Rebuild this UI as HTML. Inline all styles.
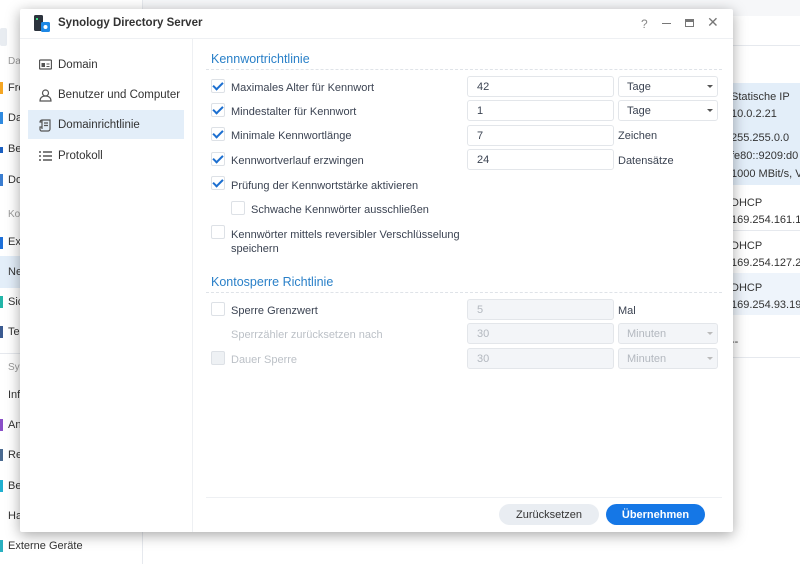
<!DOCTYPE html>
<html><head><meta charset="utf-8"><style>
*{box-sizing:border-box;margin:0;padding:0}
body{width:800px;height:564px;overflow:hidden;background:#fff;font-family:"Liberation Sans",sans-serif;font-size:11px;color:#3b4352;position:relative}
.abs{position:absolute;white-space:nowrap}
.bgl{left:0;top:0;width:143px;height:564px;background:#fff;border-right:1px solid #e6e9ee}
.bgitem{position:absolute;left:8px;font-size:11px;color:#333}
.bar{position:absolute;left:0;width:3px;height:12px}
.dlg{left:20px;top:9px;width:713px;height:523px;background:#fff;box-shadow:0 3px 14px rgba(0,0,0,.35);border-radius:2px}
.title{position:absolute;left:0;top:0;width:713px;height:30px;border-bottom:1px solid #eef0f3}
.nav{position:absolute;left:0;top:30px;width:173px;height:493px;border-right:1px solid #eef0f3}
.ni{position:absolute;left:8px;width:156px;height:29px;line-height:31px;padding-left:30px;font-size:11.5px;color:#333}
.ni svg{position:absolute;left:11px;top:9px}
.h{position:absolute;left:191px;color:#2a80c8;font-size:12.5px}
.dot{position:absolute;left:186px;width:516px;border-top:1px dashed #dfe3e8}
.cb{position:absolute;width:14px;height:14px;border:1px solid #dde1e6;border-radius:2px;background:#fff}
.cb.on::after{content:"";position:absolute;left:3px;top:0px;width:4px;height:8px;border:solid #1c6fd0;border-width:0 2px 2px 0;transform:rotate(45deg)}
.lb{position:absolute;font-size:11px;color:#3b4352;margin-top:2px}
.in{position:absolute;left:447px;width:147px;height:21px;border:1px solid #e3e6ea;border-radius:3px;padding-left:9px;line-height:21px;font-size:11px;background:#fff}
.sel{position:absolute;left:598px;width:100px;height:21px;border:1px solid #e3e6ea;border-radius:3px;padding-left:8px;line-height:21px;font-size:11px}
.sel::after{content:"";position:absolute;right:4px;top:8px;border:3px solid transparent;border-top:3px solid #555}
.dis{background:#f3f5f8;color:#b3b8bf}
.sel.dis::after{border-top-color:#bbb}
.btn{position:absolute;top:495px;height:21px;border-radius:11px;text-align:center;line-height:23px;font-size:11px}
</style></head><body>
<div class="abs" style="left:0;top:0;width:800px;height:16px;background:#f6f7f9"></div>
<div class="abs" style="left:22px;top:-5px;font-size:12px;color:#b8bcc3">Systemsteuerung</div>
<div class="abs bgl"></div>
<div class="abs" style="left:143px;top:16px;width:657px;height:30px;border-bottom:1px solid #e6e9ee"></div>
<div class="abs" style="left:0;top:28px;width:7px;height:18px;background:#e8ecf1;border-radius:2px"></div>
<div class="bgitem" style="top:56px;color:#999;font-size:10px">Da</div>
<div class="bar" style="top:82px;background:#f5a623"></div><div class="bgitem" style="top:82px">Fre</div>
<div class="bar" style="top:112px;background:#2f8ae0"></div><div class="bgitem" style="top:112px">Da</div>
<div class="bar" style="background:#1a5fc0;height:6px;top:147px"></div><div class="bgitem" style="top:143px">Be</div>
<div class="bar" style="top:174px;background:#3a7dd0"></div><div class="bgitem" style="top:174px">Do</div>
<div class="bgitem" style="top:209px;color:#999;font-size:10px">Ko</div>
<div class="bar" style="top:237px;background:#1d6fd8"></div><div class="bgitem" style="top:236px">Ex</div>
<div class="abs" style="left:0;top:256px;width:20px;height:32px;background:#e3eef9"></div><div class="bgitem" style="top:266px">Ne</div>
<div class="bar" style="top:296px;background:#22b5a8"></div><div class="bgitem" style="top:296px">Sic</div>
<div class="bar" style="top:326px;background:#3a5a90"></div><div class="bgitem" style="top:326px">Te</div>
<div class="abs" style="left:0;top:353px;width:143px;border-top:1px solid #e6e9ee"></div>
<div class="bgitem" style="top:362px;color:#999;font-size:10px">Sy</div>
<div class="bgitem" style="top:389px">Inf</div>
<div class="bar" style="top:419px;background:#8a4fc8"></div><div class="bgitem" style="top:419px">An</div>
<div class="bar" style="top:449px;background:#4a6a90"></div><div class="bgitem" style="top:449px">Re</div>
<div class="bar" style="top:480px;background:#20b0d0"></div><div class="bgitem" style="top:480px">Be</div>
<div class="bgitem" style="top:510px">Ha</div>
<div class="bar" style="top:540px;background:#2ab0c0"></div><div class="bgitem" style="top:540px">Externe Geräte</div>
<div class="abs" style="left:733px;top:83px;width:67px;height:102px;background:#e3eef9"></div>
<div class="abs" style="left:731px;top:91px;color:#333">Statische IP</div>
<div class="abs" style="left:731px;top:108px;color:#333">10.0.2.21</div>
<div class="abs" style="left:731px;top:129px;line-height:18px;color:#333">255.255.0.0<br>fe80::9209:d0<br>1000 MBit/s, V</div>
<div class="abs" style="left:731px;top:195px;line-height:17px;color:#333">DHCP<br>169.254.161.1</div>
<div class="abs" style="left:733px;top:230px;width:67px;border-top:1px solid #e6e9ee"></div>
<div class="abs" style="left:731px;top:238px;line-height:17px;color:#333">DHCP<br>169.254.127.2</div>
<div class="abs" style="left:733px;top:273px;width:67px;height:42px;background:#eef4fb"></div>
<div class="abs" style="left:731px;top:280px;line-height:17px;color:#333">DHCP<br>169.254.93.19</div>
<div class="abs" style="left:731px;top:336px;color:#333">--</div>
<div class="abs" style="left:733px;top:357px;width:67px;border-top:1px solid #e6e9ee"></div>

<div class="abs dlg">
 <div class="title">
  <svg class="abs" style="left:13px;top:6px" width="18" height="18"><rect x="1" y="0" width="9" height="16" rx="1.5" fill="#2c333d"/><rect x="3" y="3" width="2" height="2" fill="#3ddc84"/><rect x="8" y="7" width="9" height="10" rx="1.5" fill="#1e88e5"/><circle cx="12.5" cy="12" r="2" fill="#fff"/></svg>
  <div class="abs" style="left:38px;top:8px;font-size:11.5px;font-weight:bold;color:#333">Synology Directory Server</div>
  <div class="abs" style="left:621px;top:8px;color:#888;font-size:12px">?</div>
  <div class="abs" style="left:642px;top:14px;width:9px;border-top:1.5px solid #777"></div>
  <div class="abs" style="left:665px;top:10px;width:9px;height:8px;border:1.5px solid #777;border-top-width:3px"></div>
  <div class="abs" style="left:687px;top:5px;color:#777;font-size:14px">✕</div>
 </div>
 <div class="nav">
  <div class="ni" style="top:11px"><svg width="13" height="12"><rect x="0.5" y="1" width="12" height="9" rx="1" fill="none" stroke="#555" stroke-width="1.3"/><rect x="2.5" y="4" width="3.5" height="4" fill="#555"/><path d="M7.5 5h3M7.5 7.5h3" stroke="#555"/></svg>Domain</div>
  <div class="ni" style="top:41px"><svg width="13" height="13"><circle cx="6.5" cy="4" r="3" fill="none" stroke="#555" stroke-width="1.2"/><path d="M1 12c0-3 2-5 5.5-5s5.5 2 5.5 5z" fill="none" stroke="#555" stroke-width="1.2"/></svg>Benutzer und Computer</div>
  <div class="ni" style="top:71px;background:#e3eef9"><svg width="13" height="13"><path d="M3 1h8v9a2 2 0 0 1-2 2H2a2 2 0 0 1-1-2V8h2M3 1v9M3 1a2 2 0 0 0-2 2h2M5 4h4M5 6.5h4" fill="none" stroke="#555" stroke-width="1.2"/></svg>Domainrichtlinie</div>
  <div class="ni" style="top:102px"><svg width="13" height="12"><path d="M0 2h2M0 6h2M0 10h2M4 2h9M4 6h9M4 10h9" stroke="#555" stroke-width="1.4"/></svg>Protokoll</div>
 </div>
 <div class="h" style="top:43px">Kennwortrichtlinie</div>
 <div class="dot" style="top:60px"></div>
 <div class="cb on" style="left:191px;top:70px"></div><div class="lb" style="left:211px;top:71px">Maximales Alter für Kennwort</div>
 <div class="in" style="top:67px">42</div><div class="sel" style="top:67px">Tage</div>
 <div class="cb on" style="left:191px;top:94px"></div><div class="lb" style="left:211px;top:95px">Mindestalter für Kennwort</div>
 <div class="in" style="top:91px">1</div><div class="sel" style="top:91px">Tage</div>
 <div class="cb on" style="left:191px;top:118px"></div><div class="lb" style="left:211px;top:119px">Minimale Kennwortlänge</div>
 <div class="in" style="top:116px">7</div><div class="lb" style="left:598px;top:119px">Zeichen</div>
 <div class="cb on" style="left:191px;top:143px"></div><div class="lb" style="left:211px;top:144px">Kennwortverlauf erzwingen</div>
 <div class="in" style="top:140px">24</div><div class="lb" style="left:598px;top:144px">Datensätze</div>
 <div class="cb on" style="left:191px;top:167px"></div><div class="lb" style="left:211px;top:169px">Prüfung der Kennwortstärke aktivieren</div>
 <div class="cb" style="left:211px;top:192px"></div><div class="lb" style="left:231px;top:193px">Schwache Kennwörter ausschließen</div>
 <div class="cb" style="left:191px;top:216px"></div><div class="lb" style="left:211px;top:217px;line-height:14px">Kennwörter mittels reversibler Verschlüsselung<br>speichern</div>
 <div class="h" style="top:266px">Kontosperre Richtlinie</div>
 <div class="dot" style="top:283px"></div>
 <div class="cb" style="left:191px;top:293px"></div><div class="lb" style="left:211px;top:294px">Sperre Grenzwert</div>
 <div class="in dis" style="top:290px">5</div><div class="lb" style="left:598px;top:294px">Mal</div>
 <div class="lb" style="left:211px;top:318px;color:#bcc1c7">Sperrzähler zurücksetzen nach</div>
 <div class="in dis" style="top:314px">30</div><div class="sel dis" style="top:314px">Minuten</div>
 <div class="cb" style="left:191px;top:342px;background:#eef1f4"></div><div class="lb" style="left:211px;top:343px;color:#bcc1c7">Dauer Sperre</div>
 <div class="in dis" style="top:339px">30</div><div class="sel dis" style="top:339px">Minuten</div>
 <div class="abs" style="left:186px;top:488px;width:516px;border-top:1px solid #eef0f3"></div>
 <div class="btn" style="left:479px;width:100px;background:#e9edf2;color:#333">Zurücksetzen</div>
 <div class="btn" style="left:586px;width:99px;background:#1577e6;color:#fff;font-weight:bold">Übernehmen</div>
</div>
</body></html>
